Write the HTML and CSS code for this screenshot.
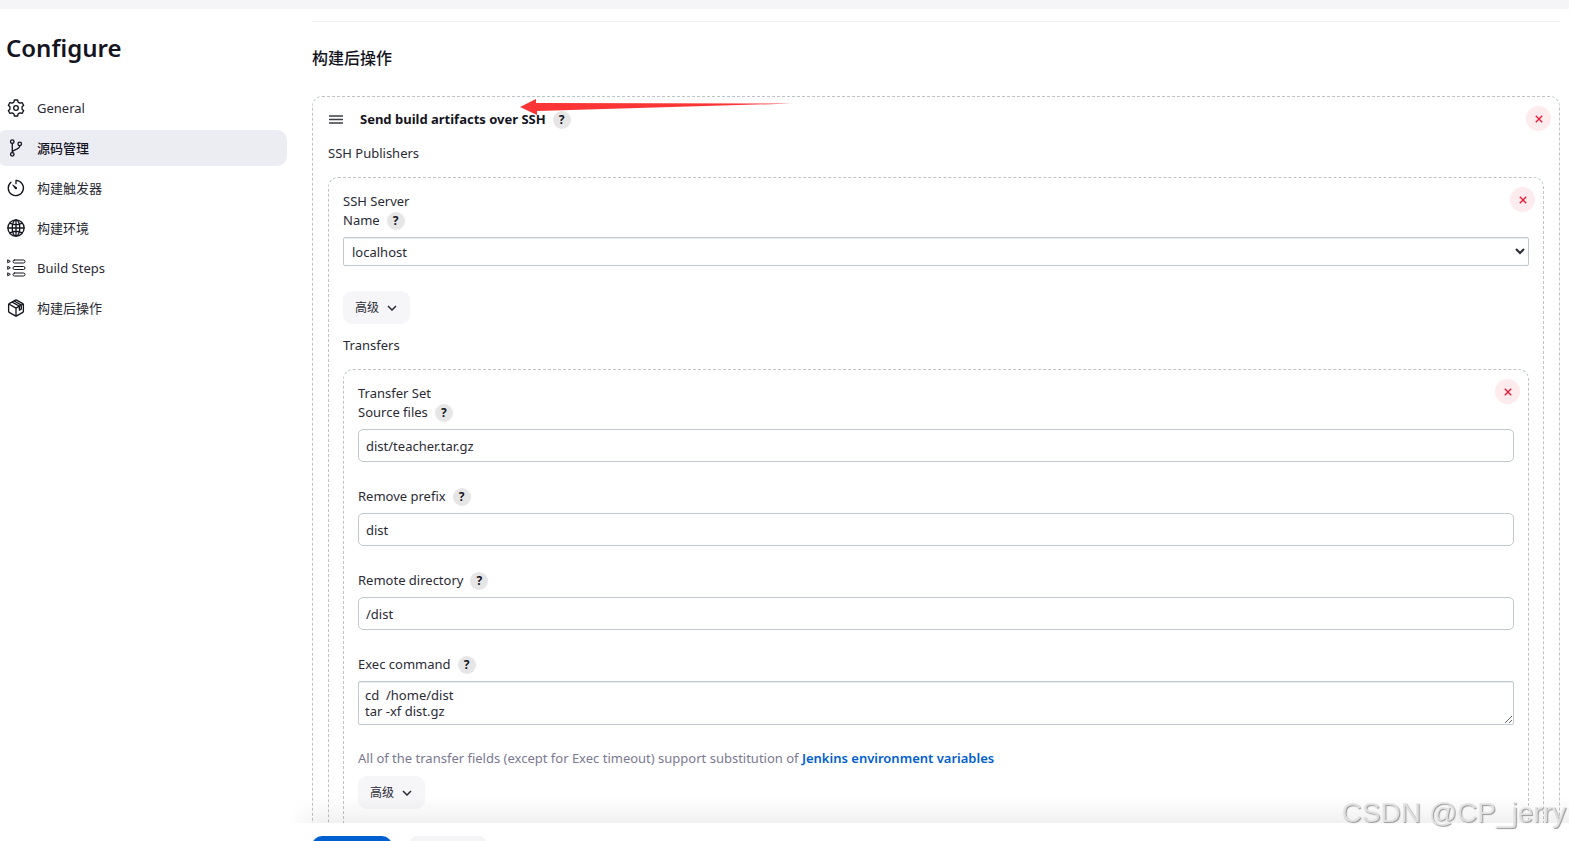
FILE: index.html
```html
<!DOCTYPE html>
<html lang="zh-CN">
<head>
    <meta charset="UTF-8">
    <meta name="viewport" content="width=device-width, initial-scale=1.0">
    <title>Configure</title>
    <link rel="stylesheet" href="styles.css">
</head>
<body>
<div class="topbar"></div>
<div class="page">
    <aside class="sidebar">
        <h1>Configure</h1>
        <nav class="tasks">
            <a class="task" href="#general">
                <svg class="icon" viewBox="0 0 512 512"><circle cx="256" cy="256" r="66"/><path d="M210 28h92l14 60 52 30 60-18 46 80-45 43v66l45 43-46 80-60-18-52 30-14 60h-92l-14-60-52-30-60 18-46-80 45-43v-66l-45-43 46-80 60 18 52-30z"/></svg>
                <span>General</span>
            </a>
            <a class="task active" href="#scm">
                <svg class="icon" viewBox="0 0 512 512"><circle cx="150" cy="76" r="50"/><circle cx="150" cy="436" r="50"/><circle cx="362" cy="140" r="50"/><path d="M150 126v260M362 190c0 128-212 90-212 192"/></svg>
                <span>源码管理</span>
            </a>
            <a class="task" href="#triggers">
                <svg class="icon" viewBox="0 0 512 512"><path d="M112 91a216 216 0 10144-51v92"/><path class="solid" d="M230 283L151 171c-5-8 6-19 14-14l112 79a33 33 0 11-47 47z"/></svg>
                <span>构建触发器</span>
            </a>
            <a class="task" href="#environment">
                <svg class="icon" viewBox="0 0 512 512"><circle cx="256" cy="256" r="230"/><ellipse cx="256" cy="256" rx="108" ry="230"/><path d="M256 26v460M26 256h460M80 116c108 60 244 60 352 0M80 396c108-60 244-60 352 0"/></svg>
                <span>构建环境</span>
            </a>
            <a class="task" href="#steps">
                <svg class="icon thin" viewBox="0 0 18 18"><rect x="6" y="1" width="12" height="3" rx="1.5"/><rect x="6" y="7.5" width="12" height="3" rx="1.5"/><rect x="6" y="14" width="12" height="3" rx="1.5"/><path d="M.7 1.2v2.6L3 2.5zM.7 7.7v2.6L3 9zM.7 14.2v2.6L3 15.5z"/></svg>
                <span>Build Steps</span>
            </a>
            <a class="task" href="#post">
                <svg class="icon" viewBox="0 0 512 512"><path d="M466 351V161a36 36 0 00-18-31L274 34a36 36 0 00-36 0L64 130a36 36 0 00-18 31v190a36 36 0 0018 31l174 98a36 36 0 0036 0l174-98a36 36 0 0018-31zM52 143l204 118 204-118M256 483V263M150 88l202 118v110l54-30V174L206 56"/></svg>
                <span>构建后操作</span>
            </a>
        </nav>
    </aside>

    <main class="main">
        <div class="content">
            <h2>构建后操作</h2>

            <section class="card outer">
                <button class="remove" type="button" aria-label="删除"><svg viewBox="0 0 8 8"><path d="M.8.8l6.4 6.4M7.2.8L.8 7.2"/></svg></button>
                <div class="card-head">
                    <svg class="handle" viewBox="0 0 14 9"><path d="M0 1h14M0 4.5h14M0 8h14"/></svg>
                    <b>Send build artifacts over SSH</b>
                    <button class="help" type="button">?</button>
                </div>
                <div class="line">SSH Publishers</div>

                <section class="card">
                    <button class="remove" type="button" aria-label="删除"><svg viewBox="0 0 8 8"><path d="M.8.8l6.4 6.4M7.2.8L.8 7.2"/></svg></button>
                    <div class="line">SSH Server</div>
                    <div class="field">
                        <div class="line"><label for="server">Name</label><button class="help" type="button">?</button></div>
                        <select id="server"><option>localhost</option></select>
                    </div>
                    <button class="advanced" type="button">高级<svg viewBox="0 0 10 6"><path d="M1 1l4 4 4-4"/></svg></button>
                    <div class="line spaced">Transfers</div>

                    <section class="card">
                        <button class="remove" type="button" aria-label="删除"><svg viewBox="0 0 8 8"><path d="M.8.8l6.4 6.4M7.2.8L.8 7.2"/></svg></button>
                        <div class="line">Transfer Set</div>
                        <div class="field">
                            <div class="line"><label for="source">Source files</label><button class="help" type="button">?</button></div>
                            <input id="source" type="text" value="dist/teacher.tar.gz">
                        </div>
                        <div class="field">
                            <div class="line"><label for="prefix">Remove prefix</label><button class="help" type="button">?</button></div>
                            <input id="prefix" type="text" value="dist">
                        </div>
                        <div class="field">
                            <div class="line"><label for="remote">Remote directory</label><button class="help" type="button">?</button></div>
                            <input id="remote" type="text" value="/dist">
                        </div>
                        <div class="field command">
                            <div class="line"><label for="exec">Exec command</label><button class="help" type="button">?</button></div>
                            <textarea id="exec" rows="2">cd  /home/dist
tar -xf dist.gz</textarea>
                        </div>
                        <p class="note">All of the transfer fields (except for Exec timeout) support substitution of <a href="#env-vars">Jenkins environment variables</a></p>
                        <button class="advanced" type="button">高级<svg viewBox="0 0 10 6"><path d="M1 1l4 4 4-4"/></svg></button>
                    </section>
                </section>

                <svg class="arrow" viewBox="0 0 272 18"><path d="M0 9L16 1v4l256 .5L17 13v4z"/></svg>
            </section>
        </div>
        <div class="bottom-bar">
            <button class="save" type="button" aria-label="保存"></button>
            <button class="apply" type="button" aria-label="应用"></button>
        </div>
    </main>
</div>
<div class="watermark">CSDN @CP_jerry</div>
</body>
</html>
```
FILE: styles.css
```css
* {
    box-sizing: border-box;
}
body {
    margin: 0;
    height: 100vh;
    display: flex;
    flex-direction: column;
    overflow: hidden;
    background: #fff;
    color: #14141f;
    font: 13px/19px "Noto Sans", "Noto Sans CJK SC", sans-serif;
}
button, input, select, textarea {
    font: inherit;
    color: inherit;
}
button {
    border: none;
    padding: 0;
    cursor: pointer;
}
svg {
    fill: none;
    stroke: currentColor;
}
.topbar {
    flex: none;
    height: 9px;
    background: #f5f5f8;
}
.page {
    flex: 1;
    min-height: 0;
    display: flex;
    gap: 3px;
}

/* sidebar */
.sidebar {
    flex: none;
    width: 287px;
}
h1 {
    margin: 22px 0 25px 6px;
    font-size: 24px;
    line-height: 34px;
    font-weight: 600;
}
.tasks {
    display: flex;
    flex-direction: column;
    gap: 4px;
    margin-left: -4px;
}
.task {
    display: flex;
    align-items: center;
    gap: 12px;
    height: 36px;
    padding-left: 11px;
    border-radius: 10px;
    color: #2a2a35;
    text-decoration: none;
}
.task.active {
    background: #ecedf3;
    color: #14141f;
    font-weight: 500;
}
.icon {
    width: 18px;
    height: 18px;
    color: #14141f;
    stroke-width: 38;
    stroke-linejoin: round;
    stroke-linecap: round;
    overflow: visible;
}
.icon.thin {
    stroke-width: 1;
}
.solid {
    fill: currentColor;
    stroke: none;
}

/* main column */
.main {
    flex: 1;
    min-width: 0;
    display: flex;
    flex-direction: column;
}
.content {
    position: relative;
    flex: 1;
    min-height: 0;
    overflow: hidden;
    padding: 12px 9px 0 22px;
}
.content::after { /* shadow above the bottom bar */
    content: "";
    position: absolute;
    left: 0;
    right: 0;
    bottom: 0;
    height: 26px;
    background: linear-gradient(rgba(0, 0, 0, 0), rgba(0, 0, 0, 0.055));
    -webkit-mask-image: linear-gradient(90deg, transparent, #000 30px);
    mask-image: linear-gradient(90deg, transparent, #000 30px);
}
h2 {
    margin: 0;
    padding: 24px 0 26px;
    border-top: 1px solid #f2f2f5;
    font-size: 16px;
    line-height: 24px;
    font-weight: 500;
}
.card {
    position: relative;
    margin-top: 14px;
    padding: 14px 14px 30px;
    border: 1px dashed #bcc4ca;
    border-radius: 10px;
    color: #2a2a35;
}
.card.outer {
    margin-top: 0;
    padding: 10px 15px 30px;
}
.card-head {
    display: flex;
    align-items: center;
    height: 25px;
    margin-bottom: 12px;
}
.card-head b {
    color: #14141f;
    font-weight: 700;
}
.handle {
    width: 14px;
    height: 9px;
    margin: 0 17px 0 1px;
    color: #3c3c48;
    stroke-width: 1.6;
}
.line {
    display: flex;
    align-items: center;
    height: 19px;
}
.spaced {
    margin-top: 12px;
}
.help {
    width: 18px;
    height: 18px;
    margin-left: 7px;
    border-radius: 50%;
    background: #e6e6e6;
    color: #14141f;
    font-size: 12px;
    line-height: 18px;
    font-weight: 700;
}
.remove {
    position: absolute;
    top: 9px;
    right: 8px;
    display: grid;
    place-items: center;
    width: 25px;
    height: 25px;
    border-radius: 50%;
    background: #fdebed;
    color: #e6203c;
}
.remove svg {
    width: 8px;
    height: 8px;
    stroke-width: 1.4;
}

/* form fields */
.field {
    margin-bottom: 25px;
}
.field input, .field select, .field textarea {
    display: block;
    width: 100%;
    margin: 7px 0 0;
    border: 1px solid #bfc9cf;
    background-color: #fff;
}
.field input {
    height: 33px;
    padding: 0 7px;
    border-radius: 5px;
}
.field select {
    height: 29px;
    padding: 0 4px;
    border-radius: 2px;
    box-shadow: inset 0 1px #e9ecee;
}
.field textarea {
    height: 44px;
    padding: 5px 6px;
    border-radius: 2px;
    line-height: 16px;
    box-shadow: inset 0 1px #e9ecee;
}
.field.command {
    margin-bottom: 24px;
}
.note {
    margin: 0 0 8px;
    color: #7b7991;
}
.note a {
    color: #0060d0;
    font-weight: 600;
    text-decoration: none;
}
.advanced {
    display: flex;
    align-items: center;
    gap: 8px;
    height: 33px;
    padding: 0 13px 0 12px;
    border-radius: 9px;
    background: #f6f6f9;
    font-size: 12px;
}
.advanced svg {
    width: 10px;
    height: 6px;
    stroke-width: 1.5;
}

.arrow {
    position: absolute;
    top: 1px;
    left: 207px;
    width: 272px;
    height: 18px;
    fill: #fb3535;
    stroke: none;
}

/* bottom bar */
.bottom-bar {
    flex: none;
    display: flex;
    gap: 16px;
    height: 18px;
    padding: 13px 0 0 22px;
    background: #fff;
    overflow: hidden;
}
.bottom-bar button {
    width: 80px;
    height: 36px;
    border-radius: 10px;
}
.save {
    background: #0060d0;
}
.apply {
    background: #f5f5f8;
}
.watermark {
    position: fixed;
    right: 3px;
    bottom: 12px;
    color: rgba(228, 228, 228, 0.9);
    font: 28px/32px "Liberation Sans", sans-serif;
    text-shadow: 1px 1px 1px #999;
}
```
